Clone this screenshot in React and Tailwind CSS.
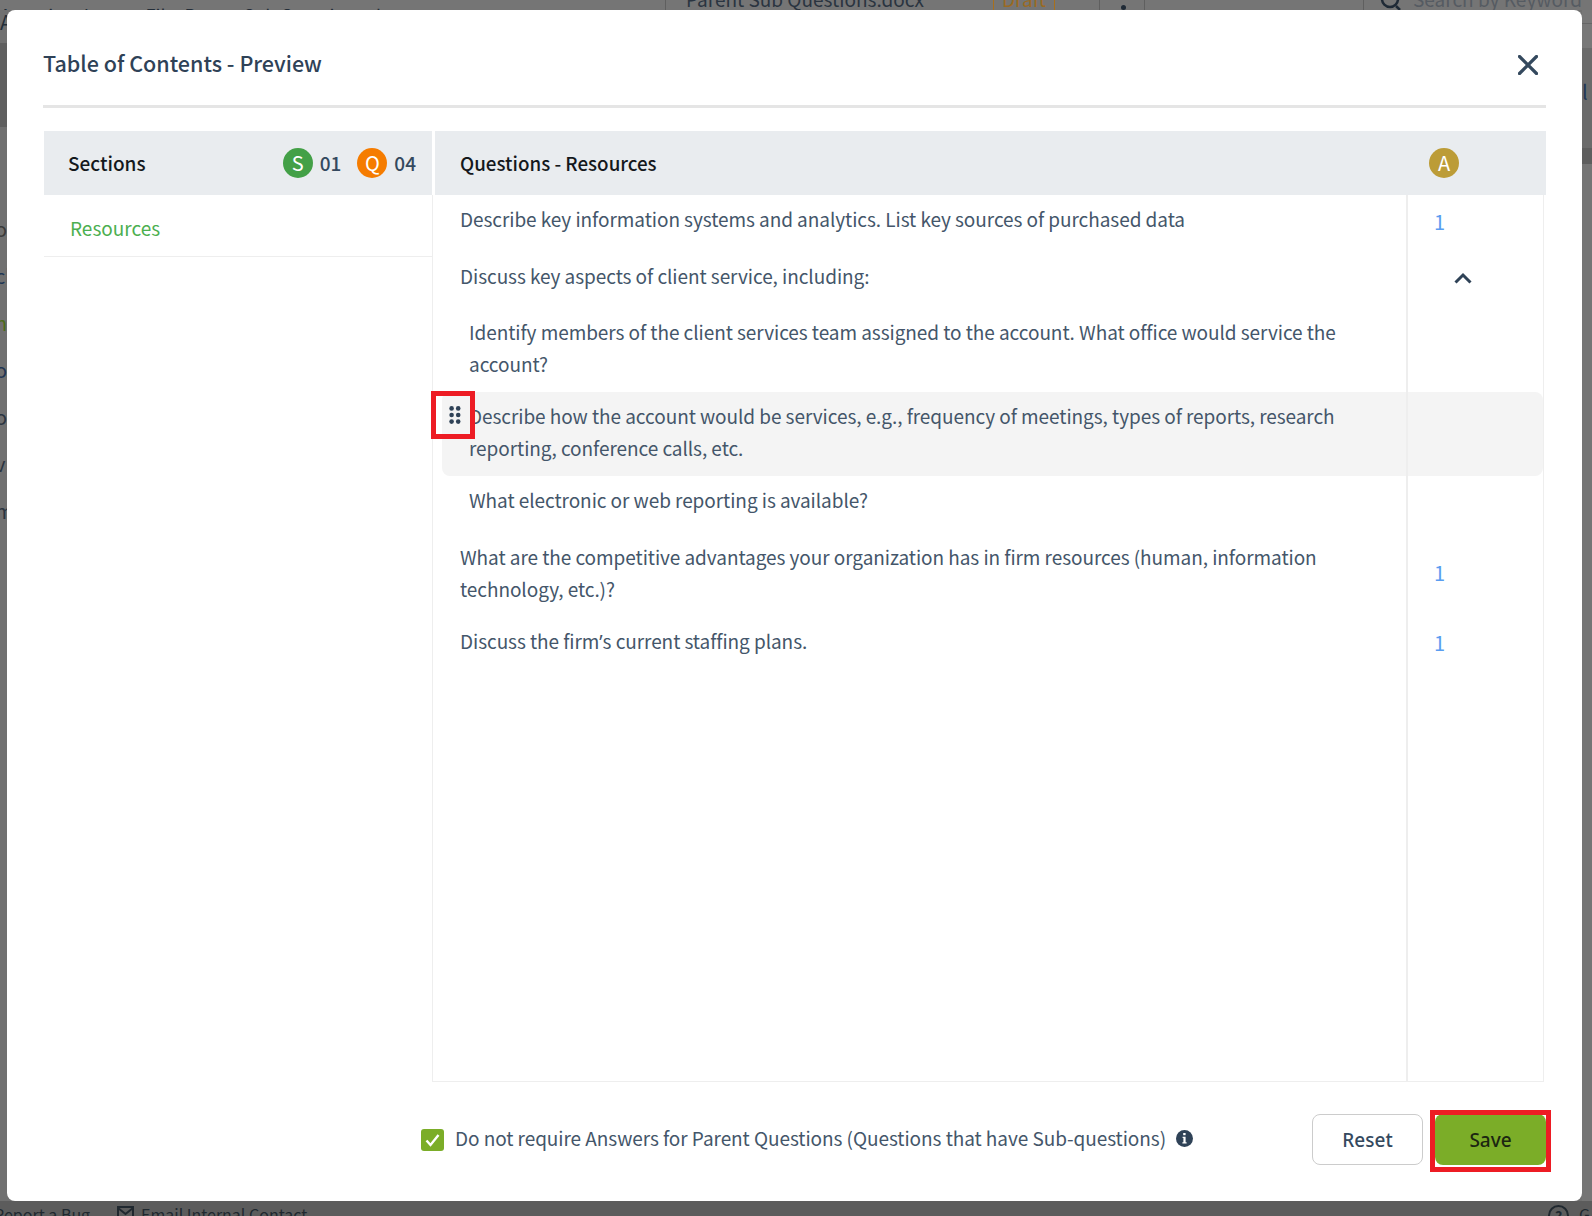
import React from "react";

function Count({ pt, children }) {
  return (
    <div className={`w-[137px] shrink-0 border-l-2 border-[#eeeeee] pl-[26px] ${pt} text-[20px] leading-[32px] tracking-normal text-[#5a9df0]`}>
      {children}
    </div>
  );
}

function Row({ children, count, rowPad, cellPad, sub, hover, extra }) {
  return (
    <div className={`relative flex ${sub ? "ml-[9px]" : ""} ${hover ? "rounded-lg bg-[#f4f4f4]" : ""}`}>
      {extra}
      <div className={`min-w-0 flex-1 pl-[27px] pr-[20px] ${rowPad}`}>{children}</div>
      <Count pt={cellPad}>{count}</Count>
    </div>
  );
}

function Dot({ className, children }) {
  return (
    <span className={`flex h-[30px] w-[30px] items-center justify-center rounded-full text-[20px] leading-none text-white ${className}`}>
      {children}
    </span>
  );
}

export default function App() {
  return (
    <div className="flex h-[1216px] w-[1592px] flex-col overflow-hidden bg-[#707070] font-['Noto_Sans_CJK_SC','Noto_Sans',sans-serif] text-[#44566a]">
      {/* dimmed page, top edge */}
      <div className="flex h-[10px] shrink-0 items-end overflow-hidden bg-[#757575] text-[19px] leading-[28px] text-[#2a3440]">
        <span className="w-[665px] shrink-0 translate-y-[19px] whitespace-nowrap text-[18px] text-[#232d38]">Associate Import File: Parent Sub Questions.docx</span>
        <div className="flex h-[10px] w-[328px] shrink-0 items-end border-l border-[#5f5f5f] pl-[20px]">
          <span className="translate-y-[3px] whitespace-nowrap">Parent Sub Questions.docx</span>
        </div>
        <div className="flex h-[10px] w-[62px] shrink-0 items-end justify-center border-x border-[#a8701c] text-[#9a6a22]">
          <span className="translate-y-[3px]">Draft</span>
        </div>
        <div className="h-[10px] w-[45px] shrink-0 border-r border-[#5f5f5f]" />
        <div className="flex h-[10px] w-[45px] shrink-0 justify-center border-r border-[#5f5f5f] pl-[2px]">
          <span className="mt-[5px] h-[5px] w-[5px] rounded-full bg-[#1f2a36]" />
        </div>
        <div className="h-[10px] w-[219px] shrink-0 border-r border-[#5f5f5f]" />
        <svg className="ml-[16px] h-[10px] w-[22px] shrink-0" viewBox="0 0 22 10" fill="none" stroke="#1f2a36" strokeWidth="2.5">
          <circle cx="10" cy="-1" r="8" />
          <path d="M16 6l4 4" />
        </svg>
        <span className="ml-[11px] translate-y-[3px] whitespace-nowrap text-[#555b62]">Search by Keyword</span>
      </div>

      <div className="flex h-[1191px] shrink-0">
        {/* dimmed page, left edge */}
        <div className="flex w-[7px] shrink-0 flex-col overflow-hidden text-[20px] leading-[24px]">
          <div className="h-[33px] text-[#232d38]">A</div>
          <div className="h-[84px] bg-[#5f5f5f]" />
          <div className="-ml-[5px] flex flex-col gap-[23px] pt-[90px] whitespace-nowrap">
            <span className="text-[#3a3a3a]">or</span>
            <span className="text-[#1f3553]">cl</span>
            <span className="text-[#4c6b1a]">ne</span>
            <span className="text-[#1f3553]">ou</span>
            <span className="text-[#2a3440]">o</span>
            <span className="text-[#2a3440]">v</span>
            <span className="text-[#2a3440]">m</span>
          </div>
        </div>

        {/* modal */}
        <div className="flex h-[1191px] w-[1575px] shrink-0 flex-col rounded-lg bg-white pl-[36px] pr-[36px]">
          <div className="flex h-[98px] shrink-0 items-center justify-between border-b-[3px] border-[#e5e5e5] pr-[8px] pt-[11px]">
            <h1 className="text-[21.5px] font-medium leading-[32px] text-[#2f4257]">Table of Contents - Preview</h1>
            <svg className="mt-[4px] h-[20px] w-[20px]" viewBox="0 0 20 20" fill="none" stroke="#34495e" strokeWidth="3.2" strokeLinecap="round">
              <path d="M1.5 1.5l17 17M18.5 1.5l-17 17" />
            </svg>
          </div>

          <div className="mt-[23px] flex h-[951px] shrink-0">
            <div className="ml-px w-[388px] shrink-0">
              <div className="flex h-[64px] items-center justify-between bg-[#e9ecef] pl-[24px] pr-[16px]">
                <span className="text-[19px] font-medium text-[#14181c]">Sections</span>
                <div className="flex items-center text-[19px]">
                  <Dot className="bg-[#43a047]">S</Dot>
                  <span className="ml-[7px] font-medium text-[#34495e]">01</span>
                  <Dot className="ml-[16px] bg-[#f57c00]">Q</Dot>
                  <span className="ml-[7px] font-medium text-[#34495e]">04</span>
                </div>
              </div>
              <div className="flex h-[62px] items-center border-b border-[#eeeeee] pl-[26px] pt-[5px] text-[19px] text-[#4caf50]">Resources</div>
            </div>

            <div className="flex min-w-0 flex-1 flex-col">
              <div className="ml-[3px] flex h-[64px] shrink-0 items-center bg-[#e9ecef] pl-[25px]">
                <span className="flex-1 text-[18.8px] font-medium text-[#14181c]">Questions - Resources</span>
                <Dot className="mr-[87px] bg-[#bc9c37]">A</Dot>
              </div>
              <div className="mr-[2px] flex flex-1 flex-col border-x border-b border-[#eeeeee] text-[19px] leading-[32px] tracking-[-0.06px]">
                <Row rowPad="pt-[8px] pb-[13px]" cellPad="pt-[11px]" count="1">
                  Describe key information systems and analytics. List key sources of purchased data
                </Row>
                <div className="relative flex">
                  <div className="min-w-0 flex-1 pb-[16px] pl-[27px] pr-[20px] pt-[12px]">Discuss key aspects of client service, including:</div>
                  <div className="flex w-[137px] shrink-0 justify-start border-l-2 border-[#eeeeee] pl-[46px] pt-[24px]">
                    <svg className="h-[12px] w-[18px]" viewBox="0 0 18 12" fill="none" stroke="#2f4257" strokeWidth="3">
                      <path d="M1.5 10.5L9 3l7.5 7.5" />
                    </svg>
                  </div>
                </div>
                <Row sub rowPad="pt-[8px] pb-[12px]" cellPad="">
                  Identify members of the client services team assigned to the account. What office would service the account?
                </Row>
                <Row
                  sub
                  hover
                  rowPad="pt-[8px] pb-[12px]"
                  cellPad=""
                  extra={
                    <div className="absolute left-[-11px] top-[-1px] z-10 flex h-[48px] w-[44px] items-center justify-center border-[5px] border-[#ed1c24] pl-[3px]">
                      <svg className="h-[18px] w-[12px]" viewBox="0 0 12 18" fill="#2f4257">
                        <circle cx="2.6" cy="2.4" r="2.3" />
                        <circle cx="9.2" cy="2.4" r="2.3" />
                        <circle cx="2.6" cy="9" r="2.3" />
                        <circle cx="9.2" cy="9" r="2.3" />
                        <circle cx="2.6" cy="15.6" r="2.3" />
                        <circle cx="9.2" cy="15.6" r="2.3" />
                      </svg>
                    </div>
                  }
                >
                  Describe how the account would be services, e.g., frequency of meetings, types of reports, research reporting, conference calls, etc.
                </Row>
                <Row sub rowPad="pt-[8px] pb-[11px]" cellPad="">
                  What electronic or web reporting is available?
                </Row>
                <Row rowPad="pt-[14px] pb-[11px]" cellPad="pt-[30px]" count="1">
                  What are the competitive advantages your organization has in firm resources (human, information technology, etc.)?
                </Row>
                <Row rowPad="pt-[9px]" cellPad="pt-[11px]" count="1">
                  Discuss the firm<span className="font-['Noto_Sans',sans-serif]">’</span>s current staffing plans.
                </Row>
                <div className="flex flex-1">
                  <div className="flex-1" />
                  <div className="w-[137px] shrink-0 border-l-2 border-[#eeeeee]" />
                </div>
              </div>
            </div>
          </div>

          <div className="mt-[32px] flex h-[51px] shrink-0 items-center justify-end">
            <span className="flex h-[22px] w-[23px] items-center justify-center rounded-[3px] bg-[#7bad28]">
              <svg className="h-[14px] w-[15px]" viewBox="0 0 15 14" fill="none" stroke="#ffffff" strokeWidth="2.4">
                <path d="M1.5 7.5l4 4.5L13.5 2" />
              </svg>
            </span>
            <span className="ml-[11px] pb-[4px] text-[19px] leading-[32px] tracking-[-0.06px] text-[#44566a]">Do not require Answers for Parent Questions (Questions that have Sub-questions)</span>
            <span className="mb-[3px] ml-[10px] flex h-[17px] w-[17px] items-center justify-center rounded-full bg-[#2f4257]">
              <svg className="h-[11px] w-[5px]" viewBox="0 0 5 11" fill="#ffffff">
                <rect x="1.2" y="0" width="2.4" height="2.2" />
                <path d="M0.6 3.8h3v5.4h1v1.3H0.4V9.2h1V5.1H0.6z" />
              </svg>
            </span>
            <button className="ml-[119px] h-[51px] w-[111px] rounded-lg border border-[#cccccc] bg-white pt-[2px] font-['Noto_Sans',sans-serif] text-[19px] font-medium text-[#34495e]">
              Reset
            </button>
            <div className="relative ml-[12px]">
              <button className="h-[51px] w-[111px] rounded-lg bg-[#7bad28] pt-[2px] font-['Noto_Sans',sans-serif] text-[19px] font-medium text-[#1c2611]">
                Save
              </button>
              <div className="absolute bottom-[-7px] left-[-5px] right-[-5px] top-[-4px] border-[5px] border-[#ed1c24]" />
            </div>
          </div>
        </div>

        {/* dimmed page, right edge */}
        <div className="flex w-[10px] shrink-0 flex-col">
          <div className="h-[14px] border-b border-[#666666] bg-[#787878]" />
          <div className="h-[24px] bg-[#787878]" />
          <div className="h-[100px] bg-[#6b6b6b] text-[20px] leading-[24px] text-[#1f3553]">
            <div className="pt-[32px]">l</div>
          </div>
          <div className="h-[16px] bg-[#5e5e5e]" />
          <div className="flex-1 bg-[#757575]" />
        </div>
      </div>

      {/* dimmed page, bottom edge */}
      <div className="flex h-[15px] shrink-0 items-start overflow-hidden bg-[#5c5c5c] text-[16px] leading-[28px] text-[#20282f]">
        <span className="-ml-[6px] -mt-[1px] w-[123px] shrink-0 whitespace-nowrap">Report a Bug</span>
        <svg className="mt-[5px] h-[14px] w-[17px] shrink-0" viewBox="0 0 17 14" fill="none" stroke="#20282f" strokeWidth="2">
          <rect x="1" y="1" width="15" height="12" />
          <path d="M1 2l7.5 6L16 2" />
        </svg>
        <span className="-mt-[1px] ml-[7px] w-[1407px] shrink-0 whitespace-nowrap">Email Internal Contact</span>
        <span className="mt-[4px] flex h-[21px] w-[21px] shrink-0 items-center justify-center rounded-full border-2 border-[#20282f] text-[14px] font-bold leading-none">?</span>
        <span className="-mt-[1px] ml-[10px]">G</span>
      </div>
    </div>
  );
}
